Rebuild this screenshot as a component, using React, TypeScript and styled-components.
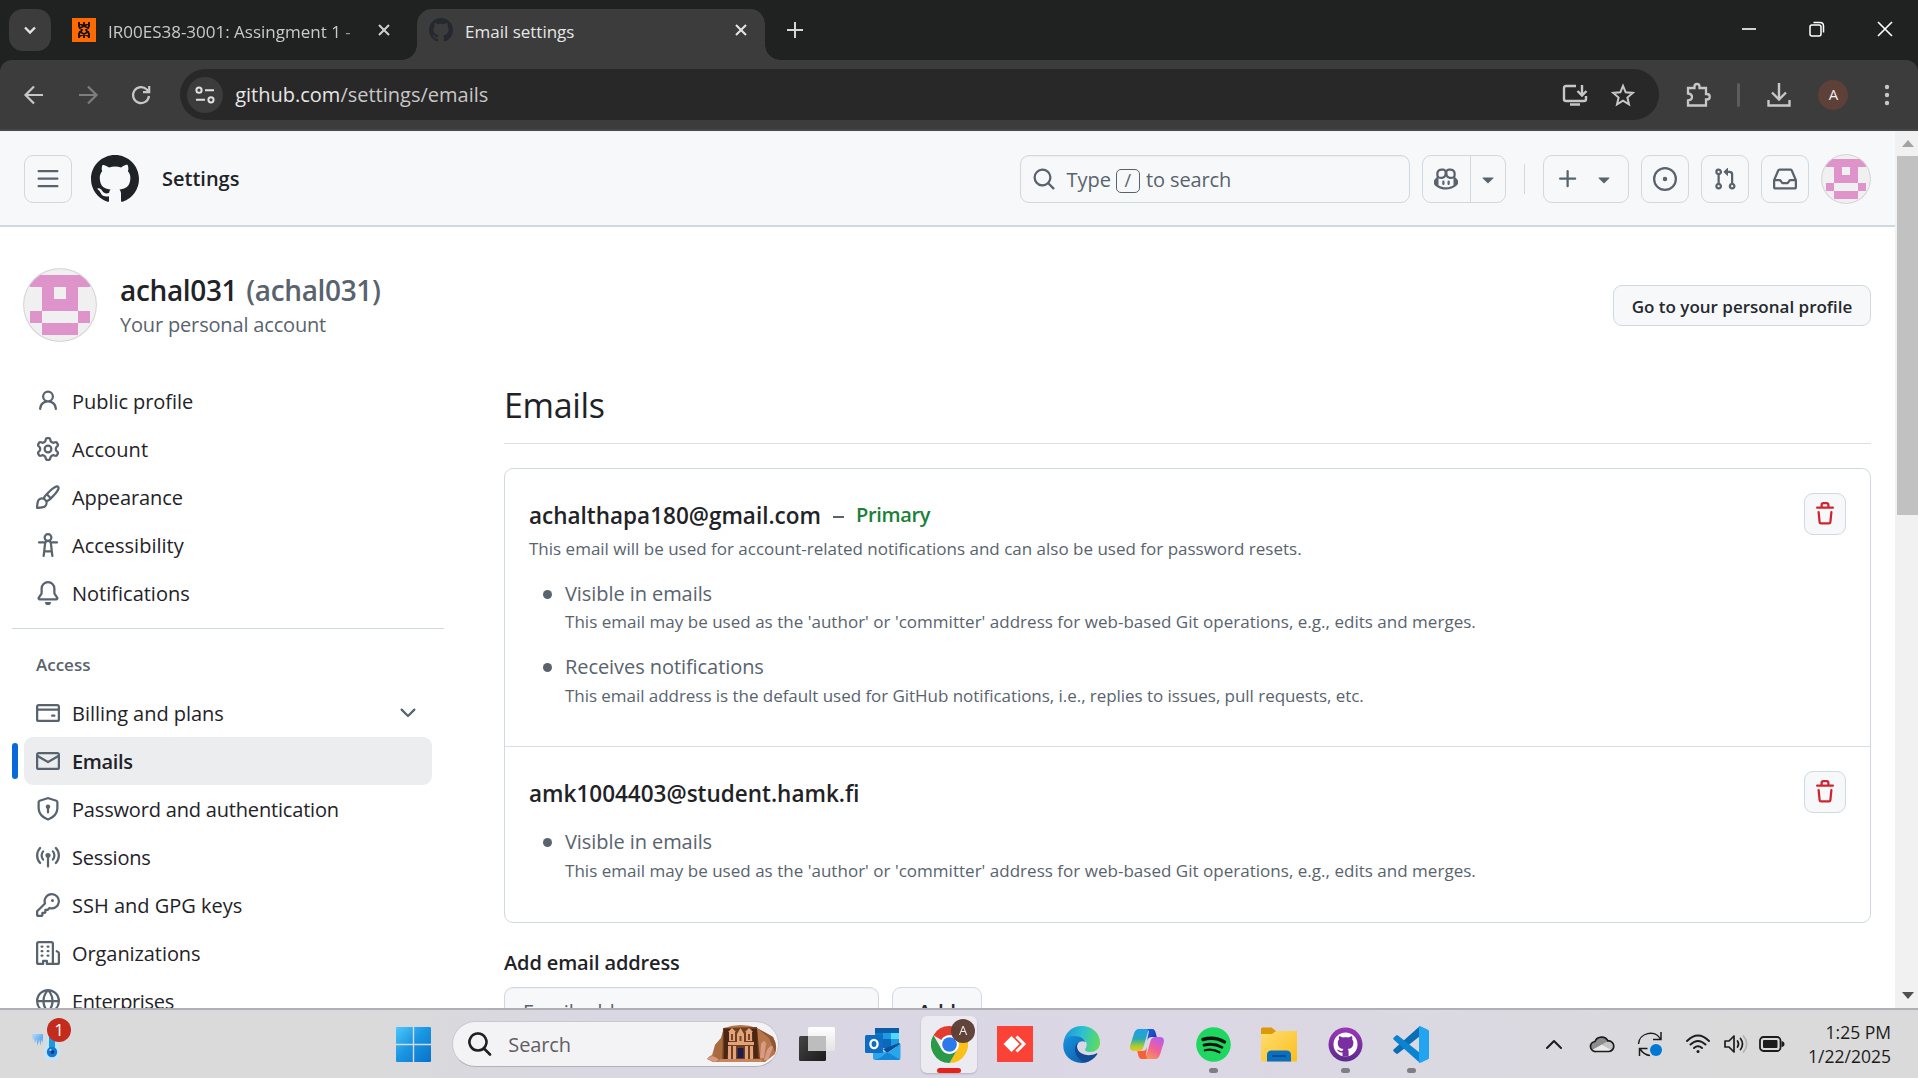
import React from "react";
import styled, { createGlobalStyle, css } from "styled-components";

const FONT = '"Segoe UI", "Open Sans", "Noto Sans", sans-serif';

const GlobalStyle = createGlobalStyle`
  *, *::before, *::after { box-sizing: border-box; }
  html, body { margin: 0; padding: 0; background: #202221; overflow: hidden; }
  body { font-family: ${FONT}; color: #1f2328; }
  svg { display: block; flex: none; }
  ul { list-style: none; margin: 0; padding: 0; }
  h1, h2, h3, p { margin: 0; font-weight: 400; }
`;

/* ---------- shared ---------- */

const Txt = styled.span<{ $size?: number; $track?: number; $weight?: number; $color?: string; $dy?: number }>`
  display: inline-block;
  white-space: pre;
  line-height: 1.4;
  font-size: ${(p) => p.$size ?? 20}px;
  letter-spacing: ${(p) => p.$track ?? 0}px;
  font-weight: ${(p) => p.$weight ?? 400};
  color: ${(p) => p.$color ?? "inherit"};
  margin-top: ${(p) => (p.$dy ?? 0) * 2}px;
`;

const ICONS: Record<string, string> = {
  bars: "M1 2.75A.75.75 0 0 1 1.75 2h12.5a.75.75 0 0 1 0 1.5H1.75A.75.75 0 0 1 1 2.75Zm0 5A.75.75 0 0 1 1.75 7h12.5a.75.75 0 0 1 0 1.5H1.75A.75.75 0 0 1 1 7.75ZM1.75 12h12.5a.75.75 0 0 1 0 1.5H1.75a.75.75 0 0 1 0-1.5Z",
  github: "M8 0c4.42 0 8 3.58 8 8a8.013 8.013 0 0 1-5.45 7.59c-.4.08-.55-.17-.55-.38 0-.27.01-1.13.01-2.2 0-.75-.25-1.23-.54-1.48 1.78-.2 3.65-.88 3.65-3.95 0-.88-.31-1.59-.82-2.15.08-.2.36-1.02-.08-2.12 0 0-.67-.22-2.2.82-.64-.18-1.32-.27-2-.27-.68 0-1.36.09-2 .27-1.53-1.03-2.2-.82-2.2-.82-.44 1.1-.16 1.92-.08 2.12-.51.56-.82 1.28-.82 2.15 0 3.06 1.86 3.75 3.64 3.95-.23.2-.44.55-.51 1.07-.46.21-1.61.55-2.33-.66-.15-.24-.6-.83-1.23-.82-.67.01-.27.38.01.53.34.19.73.9.82 1.13.16.45.68 1.31 2.69.94 0 .67.01 1.3.01 1.49 0 .21-.15.45-.55.38A7.995 7.995 0 0 1 0 8c0-4.42 3.58-8 8-8Z",
  search: "M10.68 11.74a6 6 0 0 1-7.922-8.982 6 6 0 0 1 8.982 7.922l3.04 3.04a.749.749 0 0 1-.326 1.275.749.749 0 0 1-.734-.215ZM11.5 7a4.499 4.499 0 1 0-8.997 0A4.499 4.499 0 0 0 11.5 7Z",
  copilot: "M7.998 15.035c-4.562 0-7.873-2.914-7.998-3.749V9.338c.085-.628.677-1.686 1.588-2.065.013-.07.024-.143.036-.218.029-.183.06-.384.126-.612-.201-.508-.254-1.084-.254-1.656 0-.87.128-1.769.693-2.484.579-.733 1.494-1.124 2.724-1.261 1.206-.134 2.262.034 2.944.765.05.053.096.108.139.165.044-.057.094-.112.143-.165.682-.731 1.738-.899 2.944-.765 1.23.137 2.145.528 2.724 1.261.566.715.693 1.614.693 2.484 0 .572-.053 1.148-.254 1.656.066.228.098.429.126.612.012.076.024.148.037.218.924.385 1.522 1.471 1.591 2.095v1.872c0 .766-3.351 3.795-8.002 3.795Zm0-1.485c2.28 0 4.584-1.11 5.002-1.433V7.862l-.023-.116c-.49.21-1.075.291-1.727.291-1.146 0-2.059-.327-2.71-.991A3.222 3.222 0 0 1 8 6.303a3.24 3.24 0 0 1-.544.743c-.65.664-1.563.991-2.71.991-.652 0-1.236-.081-1.727-.291l-.023.116v4.255c.419.323 2.722 1.433 5.002 1.433ZM6.762 2.83c-.193-.206-.637-.413-1.682-.297-1.019.113-1.479.404-1.713.7-.247.312-.369.789-.369 1.554 0 .793.129 1.171.308 1.371.162.181.519.379 1.442.379.853 0 1.339-.235 1.638-.54.315-.322.527-.827.617-1.553.117-.935-.037-1.395-.241-1.614Zm4.155-.297c-1.044-.116-1.488.091-1.681.297-.204.219-.359.679-.242 1.614.091.726.303 1.231.618 1.553.299.305.784.54 1.638.54.922 0 1.28-.198 1.442-.379.179-.2.308-.578.308-1.371 0-.765-.123-1.242-.37-1.554-.233-.296-.693-.587-1.713-.7ZM6.25 9.037a.75.75 0 0 1 .75.75v1.501a.75.75 0 0 1-1.5 0V9.787a.75.75 0 0 1 .75-.75Zm4.25.75v1.501a.75.75 0 0 1-1.5 0V9.787a.75.75 0 0 1 1.5 0Z",
  caret: "m4.427 7.427 3.396 3.396a.25.25 0 0 0 .354 0l3.396-3.396A.25.25 0 0 0 11.396 7H4.604a.25.25 0 0 0-.177.427Z",
  plus: "M7.75 2a.75.75 0 0 1 .75.75V7h4.25a.75.75 0 0 1 0 1.5H8.5v4.25a.75.75 0 0 1-1.5 0V8.5H2.75a.75.75 0 0 1 0-1.5H7V2.75A.75.75 0 0 1 7.75 2Z",
  issue: "M8 9.5a1.5 1.5 0 1 0 0-3 1.5 1.5 0 0 0 0 3ZM8 0a8 8 0 1 1 0 16A8 8 0 0 1 8 0ZM1.5 8a6.5 6.5 0 1 0 13 0 6.5 6.5 0 0 0-13 0Z",
  pull: "M1.5 3.25a2.25 2.25 0 1 1 3 2.122v5.256a2.251 2.251 0 1 1-1.5 0V5.372A2.25 2.25 0 0 1 1.5 3.25Zm5.677-.177L9.573.677A.25.25 0 0 1 10 .854V2.5h1A2.5 2.5 0 0 1 13.5 5v5.628a2.251 2.251 0 1 1-1.5 0V5a1 1 0 0 0-1-1h-1v1.646a.25.25 0 0 1-.427.177L7.177 3.427a.25.25 0 0 1 0-.354ZM3.75 2.5a.75.75 0 1 0 0 1.5.75.75 0 0 0 0-1.5Zm0 9.5a.75.75 0 1 0 0 1.5.75.75 0 0 0 0-1.5Zm8.25.75a.75.75 0 1 0 1.5 0 .75.75 0 0 0-1.5 0Z",
  inbox: "M2.8 2.06A1.75 1.75 0 0 1 4.41 1h7.18c.7 0 1.333.417 1.61 1.06l2.74 6.395c.04.093.06.194.06.295v4.5A1.75 1.75 0 0 1 14.25 15H1.75A1.75 1.75 0 0 1 0 13.25v-4.5c0-.101.02-.202.06-.295Zm1.61.44a.25.25 0 0 0-.23.152L1.887 8H4.75a.75.75 0 0 1 .6.3L6.625 10h2.75l1.275-1.7a.75.75 0 0 1 .6-.3h2.863L11.82 2.652a.25.25 0 0 0-.23-.152Zm10.09 7h-2.875l-1.275 1.7a.75.75 0 0 1-.6.3h-3.5a.75.75 0 0 1-.6-.3L4.375 9.5H1.5v3.75c0 .138.112.25.25.25h12.5a.25.25 0 0 0 .25-.25Z",
  person: "M10.561 8.073a6.005 6.005 0 0 1 3.432 5.142.75.75 0 1 1-1.498.07 4.5 4.5 0 0 0-8.99 0 .75.75 0 0 1-1.498-.07 6.004 6.004 0 0 1 3.431-5.142 3.999 3.999 0 1 1 5.123 0ZM10.5 5a2.5 2.5 0 1 0-5 0 2.5 2.5 0 0 0 5 0Z",
  gear: "M8 0a8.2 8.2 0 0 1 .701.031C9.444.095 9.99.645 10.16 1.29l.288 1.107c.018.066.079.158.212.224.231.114.454.243.668.386.123.082.233.09.299.071l1.103-.303c.644-.176 1.392.021 1.82.63.27.385.506.792.704 1.218.315.675.111 1.422-.364 1.891l-.814.806c-.049.048-.098.147-.088.294.016.257.016.515 0 .772-.01.147.038.246.088.294l.814.806c.475.469.679 1.216.364 1.891a7.977 7.977 0 0 1-.704 1.217c-.428.61-1.176.807-1.82.63l-1.102-.302c-.067-.019-.177-.011-.3.071a5.909 5.909 0 0 1-.668.386c-.133.066-.194.158-.211.224l-.29 1.106c-.168.646-.715 1.196-1.458 1.26a8.006 8.006 0 0 1-1.402 0c-.743-.064-1.289-.614-1.458-1.26l-.289-1.106c-.018-.066-.079-.158-.212-.224a5.738 5.738 0 0 1-.668-.386c-.123-.082-.233-.09-.299-.071l-1.103.303c-.644.176-1.392-.021-1.82-.63a8.12 8.12 0 0 1-.704-1.218c-.315-.675-.111-1.422.363-1.891l.815-.806c.05-.048.098-.147.088-.294a6.214 6.214 0 0 1 0-.772c.01-.147-.038-.246-.088-.294l-.815-.806C.635 6.045.431 5.298.746 4.623a7.92 7.92 0 0 1 .704-1.217c.428-.61 1.176-.807 1.82-.63l1.102.302c.067.019.177.011.3-.071.214-.143.437-.272.668-.386.133-.066.194-.158.211-.224l.29-1.106C6.009.645 6.556.095 7.299.03 7.53.01 7.764 0 8 0Zm-.571 1.525c-.036.003-.108.036-.137.146l-.289 1.105c-.147.561-.549.967-.998 1.189-.173.086-.34.183-.5.29-.417.278-.97.423-1.529.27l-1.103-.303c-.109-.03-.175.016-.195.045-.22.312-.412.644-.573.99-.014.031-.021.11.059.19l.815.806c.411.406.562.957.53 1.456a4.709 4.709 0 0 0 0 .582c.032.499-.119 1.05-.53 1.456l-.815.806c-.081.08-.073.159-.059.19.162.346.353.677.573.989.02.03.085.076.195.046l1.102-.303c.56-.153 1.113-.008 1.53.27.161.107.328.204.501.29.447.222.85.629.997 1.189l.289 1.105c.029.109.101.143.137.146a6.6 6.6 0 0 0 1.142 0c.036-.003.108-.036.137-.146l.289-1.105c.147-.561.549-.967.998-1.189.173-.086.34-.183.5-.29.417-.278.97-.423 1.529-.27l1.103.303c.109.029.175-.016.195-.045.22-.313.411-.644.573-.99.014-.031.021-.11-.059-.19l-.815-.806c-.411-.406-.562-.957-.53-1.456a4.709 4.709 0 0 0 0-.582c-.032-.499.119-1.05.53-1.456l.815-.806c.081-.08.073-.159.059-.19a6.464 6.464 0 0 0-.573-.989c-.02-.03-.085-.076-.195-.046l-1.102.303c-.56.153-1.113.008-1.53-.27a4.44 4.44 0 0 0-.501-.29c-.447-.222-.85-.629-.997-1.189l-.289-1.105c-.029-.11-.101-.143-.137-.146a6.6 6.6 0 0 0-1.142 0ZM11 8a3 3 0 1 1-6 0 3 3 0 0 1 6 0ZM9.5 8a1.5 1.5 0 1 0-3.001.001A1.5 1.5 0 0 0 9.5 8Z",
  brush: "M11.134 1.535c.7-.509 1.416-.942 2.076-1.155.649-.21 1.463-.267 2.069.34.603.601.568 1.411.368 2.07-.202.668-.624 1.39-1.125 2.096-1.011 1.424-2.496 2.987-3.775 4.249-1.098 1.084-2.132 1.839-3.04 2.3a3.744 3.744 0 0 1-1.055 3.217c-.431.431-1.065.691-1.657.861-.614.177-1.294.287-1.914.357A21.151 21.151 0 0 1 .797 16H.743l.007-.75H.749L.742 16a.75.75 0 0 1-.743-.742l.743-.008-.742.007v-.054a21.25 21.25 0 0 1 .13-2.284c.067-.647.187-1.287.358-1.914.17-.591.43-1.226.86-1.657a3.746 3.746 0 0 1 3.227-1.054c.466-.893 1.225-1.907 2.314-2.982 1.271-1.255 2.833-2.75 4.245-3.777ZM1.62 13.089c-.051.464-.086.929-.104 1.395.466-.018.932-.053 1.396-.104a10.511 10.511 0 0 0 1.668-.309c.526-.151.856-.325 1.011-.48a2.25 2.25 0 1 0-3.182-3.182c-.155.155-.329.485-.48 1.01a10.515 10.515 0 0 0-.309 1.67Zm10.396-10.34c-1.224.89-2.605 2.189-3.822 3.384l1.718 1.718c1.21-1.205 2.51-2.597 3.387-3.833.47-.662.78-1.227.912-1.662.134-.444.032-.551.009-.575h-.001V1.78c-.014-.014-.113-.113-.548.027-.432.14-.995.462-1.655.942Zm-4.832 7.266-.001.001a9.859 9.859 0 0 0 1.63-1.142L7.155 7.216a9.7 9.7 0 0 0-1.161 1.607c.482.302.889.71 1.19 1.192Z",
  accessibility: "M9.923 5.302c.063.063.122.129.178.198H14A.75.75 0 0 1 14 7h-3.3l.578 5.163.362 2.997a.75.75 0 0 1-1.49.18L9.868 13H6.132l-.282 2.34a.75.75 0 0 1-1.49-.18l.362-2.997L5.3 7H2a.75.75 0 0 1 0-1.5h3.9a2.54 2.54 0 0 1 .176-.198 3 3 0 1 1 3.847 0ZM9.2 7.073h-.001a1.206 1.206 0 0 0-2.398 0L6.305 11.5h3.39ZM9.5 3a1.5 1.5 0 1 0-3.001.001A1.5 1.5 0 0 0 9.5 3Z",
  bell: "M8 16a2 2 0 0 0 1.985-1.75c.017-.137-.097-.25-.235-.25h-3.5c-.138 0-.252.113-.235.25A2 2 0 0 0 8 16ZM3 5a5 5 0 0 1 10 0v2.947c0 .05.015.098.042.139l1.703 2.555A1.519 1.519 0 0 1 13.482 13H2.518a1.516 1.516 0 0 1-1.263-2.36l1.703-2.554A.255.255 0 0 0 3 7.947Zm5-3.5A3.5 3.5 0 0 0 4.5 5v2.947c0 .346-.102.683-.294.97l-1.703 2.556a.017.017 0 0 0-.003.01l.001.006c0 .002.002.004.004.006l.006.004.007.001h10.964l.007-.001.006-.004.004-.006.001-.007a.017.017 0 0 0-.003-.01l-1.703-2.554a1.745 1.745 0 0 1-.294-.97V5A3.5 3.5 0 0 0 8 1.5Z",
  card: "M10.75 9a.75.75 0 0 0 0 1.5h1.5a.75.75 0 0 0 0-1.5h-1.5ZM0 3.75C0 2.784.784 2 1.75 2h12.5c.966 0 1.75.784 1.75 1.75v8.5A1.75 1.75 0 0 1 14.25 14H1.75A1.75 1.75 0 0 1 0 12.25ZM14.5 6.5h-13v5.75c0 .138.112.25.25.25h12.5a.25.25 0 0 0 .25-.25Zm0-2.75a.25.25 0 0 0-.25-.25H1.75a.25.25 0 0 0-.25.25V5h13Z",
  mail: "M1.75 2h12.5c.966 0 1.75.784 1.75 1.75v8.5A1.75 1.75 0 0 1 14.25 14H1.75A1.75 1.75 0 0 1 0 12.25v-8.5C0 2.784.784 2 1.75 2ZM1.5 12.251c0 .138.112.25.25.25h12.5a.25.25 0 0 0 .25-.25V5.809L8.38 9.397a.75.75 0 0 1-.76 0L1.5 5.809v6.442Zm13-8.181v-.32a.25.25 0 0 0-.25-.25H1.75a.25.25 0 0 0-.25.25v.32L8 7.88Z",
  shield: "m8.533.133 5.25 1.68A1.75 1.75 0 0 1 15 3.48V7c0 1.566-.32 3.182-1.303 4.682-.983 1.498-2.585 2.813-5.032 3.855a1.697 1.697 0 0 1-1.33 0c-2.447-1.042-4.049-2.357-5.032-3.855C1.32 10.182 1 8.566 1 7V3.48a1.75 1.75 0 0 1 1.217-1.667l5.25-1.68a1.748 1.748 0 0 1 1.066 0Zm-.61 1.429.001.001-5.25 1.68a.251.251 0 0 0-.174.237V7c0 1.36.275 2.666 1.057 3.859.784 1.194 2.121 2.342 4.366 3.298a.196.196 0 0 0 .154 0c2.245-.957 3.582-2.103 4.366-3.297C13.225 9.666 13.5 8.358 13.5 7V3.48a.25.25 0 0 0-.174-.238l-5.25-1.68a.25.25 0 0 0-.153 0ZM9.5 6.5c0 .536-.286 1.032-.75 1.3v2.45a.75.75 0 0 1-1.5 0V7.8A1.5 1.5 0 1 1 9.5 6.5Z",
  broadcast: "M8.75 8.582v5.668a.75.75 0 0 1-1.5 0V8.582a1.75 1.75 0 1 1 1.5 0Zm3.983-7.125a.75.75 0 0 1 1.06.026A7.976 7.976 0 0 1 16 7c0 2.139-.84 4.083-2.207 5.517a.75.75 0 1 1-1.086-1.034A6.474 6.474 0 0 0 14.5 7a6.474 6.474 0 0 0-1.793-4.483.75.75 0 0 1 .026-1.06Zm-9.466 0c.3.286.312.76.026 1.06A6.474 6.474 0 0 0 1.5 7a6.47 6.47 0 0 0 1.793 4.483.75.75 0 0 1-1.086 1.034A7.973 7.973 0 0 1 0 7c0-2.139.84-4.083 2.207-5.517a.75.75 0 0 1 1.06-.026Zm8.556 2.321A4.988 4.988 0 0 1 13 7a4.988 4.988 0 0 1-1.177 3.222.75.75 0 1 1-1.146-.967A3.487 3.487 0 0 0 11.5 7c0-.86-.309-1.645-.823-2.255a.75.75 0 0 1 1.146-.967Zm-6.492.958A3.48 3.48 0 0 0 4.5 7a3.48 3.48 0 0 0 .823 2.255.75.75 0 0 1-1.146.967A4.981 4.981 0 0 1 3 7a4.982 4.982 0 0 1 1.188-3.236.75.75 0 1 1 1.143.972Z",
  key: "M10.5 0a5.499 5.499 0 1 1-1.288 10.848l-.932.932a.749.749 0 0 1-.53.22H7v.75a.749.749 0 0 1-.22.53l-.5.5a.749.749 0 0 1-.53.22H5v.75a.749.749 0 0 1-.22.53l-.5.5a.749.749 0 0 1-.53.22h-2A1.75 1.75 0 0 1 0 14.25v-2c0-.199.079-.389.22-.53l4.932-4.932A5.5 5.5 0 0 1 10.5 0Zm-4 5.5c-.001.431.069.86.205 1.269a.75.75 0 0 1-.181.768L1.5 12.56v1.69c0 .138.112.25.25.25h1.69l.06-.06v-1.19a.75.75 0 0 1 .75-.75h1.19l.06-.06v-1.19a.75.75 0 0 1 .75-.75h1.19l1.023-1.025a.75.75 0 0 1 .768-.18A4 4 0 1 0 6.5 5.5ZM11 6a1 1 0 1 1 0-2 1 1 0 0 1 0 2Z",
  org: "M1.75 16A1.75 1.75 0 0 1 0 14.25V1.75C0 .784.784 0 1.75 0h8.5C11.216 0 12 .784 12 1.75v12.5c0 .085-.006.168-.018.25h2.268a.25.25 0 0 0 .25-.25V8.285a.25.25 0 0 0-.111-.208l-1.055-.703a.749.749 0 1 1 .832-1.248l1.055.703c.487.325.779.871.779 1.456v5.965A1.75 1.75 0 0 1 14.25 16h-3.5a.766.766 0 0 1-.197-.026c-.099.017-.2.026-.303.026h-3a.75.75 0 0 1-.75-.75V14h-1v1.25a.75.75 0 0 1-.75.75Zm-.25-1.75c0 .138.112.25.25.25H4v-1.25a.75.75 0 0 1 .75-.75h2.5a.75.75 0 0 1 .75.75v1.25h2.25a.25.25 0 0 0 .25-.25V1.75a.25.25 0 0 0-.25-.25h-8.5a.25.25 0 0 0-.25.25ZM3.75 6h.5a.75.75 0 0 1 0 1.5h-.5a.75.75 0 0 1 0-1.5ZM3 3.75A.75.75 0 0 1 3.75 3h.5a.75.75 0 0 1 0 1.5h-.5A.75.75 0 0 1 3 3.75Zm4 3A.75.75 0 0 1 7.75 6h.5a.75.75 0 0 1 0 1.5h-.5A.75.75 0 0 1 7 6.75ZM7.75 3h.5a.75.75 0 0 1 0 1.5h-.5a.75.75 0 0 1 0-1.5ZM3 9.75A.75.75 0 0 1 3.75 9h.5a.75.75 0 0 1 0 1.5h-.5A.75.75 0 0 1 3 9.75ZM7.75 9h.5a.75.75 0 0 1 0 1.5h-.5a.75.75 0 0 1 0-1.5Z",
  globe: "M8 0a8 8 0 1 1 0 16A8 8 0 0 1 8 0ZM5.78 8.75a9.64 9.64 0 0 0 1.363 4.177c.255.426.542.832.857 1.215.245-.296.551-.705.857-1.215A9.64 9.64 0 0 0 10.22 8.75Zm4.44-1.5a9.64 9.64 0 0 0-1.363-4.177c-.307-.51-.612-.919-.857-1.215a9.927 9.927 0 0 0-.857 1.215A9.64 9.64 0 0 0 5.78 7.25Zm-5.944 1.5H1.543a6.507 6.507 0 0 0 4.666 5.5c-.123-.181-.24-.365-.352-.552-.715-1.192-1.437-2.874-1.581-4.948Zm-2.733-1.5h2.733c.144-2.074.866-3.756 1.58-4.948.12-.197.237-.381.353-.552a6.507 6.507 0 0 0-4.666 5.5Zm10.181 1.5c-.144 2.074-.866 3.756-1.58 4.948-.12.197-.237.381-.353.552a6.507 6.507 0 0 0 4.666-5.5Zm2.733-1.5a6.507 6.507 0 0 0-4.666-5.5c.123.181.24.365.353.552.714 1.192 1.436 2.874 1.58 4.948Z",
  trash: "M11 1.75V3h2.25a.75.75 0 0 1 0 1.5H2.75a.75.75 0 0 1 0-1.5H5V1.75C5 .784 5.784 0 6.75 0h2.5C10.216 0 11 .784 11 1.75ZM4.496 6.675l.66 6.6a.25.25 0 0 0 .249.225h5.19a.25.25 0 0 0 .249-.225l.66-6.6a.75.75 0 0 1 1.492.149l-.66 6.6A1.748 1.748 0 0 1 10.595 15h-5.19a1.75 1.75 0 0 1-1.741-1.575l-.66-6.6a.75.75 0 1 1 1.492-.15ZM6.5 1.75V3h3V1.75a.25.25 0 0 0-.25-.25h-2.5a.25.25 0 0 0-.25.25Z",
  chevron: "M12.78 5.22a.749.749 0 0 1 0 1.06l-4.25 4.25a.749.749 0 0 1-1.06 0L3.22 6.28a.749.749 0 1 1 1.06-1.06L8 8.939l3.72-3.719a.749.749 0 0 1 1.06 0Z",
};

function Icon({ name, size = 24, color = "#59636e" }: { name: string; size?: number; color?: string }) {
  return (
    <svg width={size} height={size} viewBox="0 0 16 16" fill={color}>
      <path d={ICONS[name]} />
    </svg>
  );
}

type StrokeProps = { d: string; w?: number; h?: number; color?: string; sw?: number; round?: boolean };
function Stroke({ d, w = 24, h = 24, color = "#c7c7c7", sw = 2.2, round }: StrokeProps) {
  return (
    <svg width={w} height={h} viewBox={`0 0 ${w} ${h}`} fill="none" stroke={color} strokeWidth={sw}
      strokeLinecap={round ? "round" : "butt"} strokeLinejoin={round ? "round" : "miter"}>
      <path d={d} />
    </svg>
  );
}

/* ---------- browser chrome ---------- */

const Screen = styled.div`
  width: 1918px;
  height: 1078px;
  display: flex;
  flex-direction: column;
  overflow: hidden;
`;

const TabStrip = styled.div`
  height: 60px;
  flex: none;
  display: flex;
  align-items: flex-start;
  background: #202221;
  padding-left: 9px;
`;

const TabSearch = styled.div`
  width: 42px;
  height: 42px;
  margin-top: 9px;
  border-radius: 14px;
  background: #3c3c3c;
  display: grid;
  place-items: center;
`;

const flare = css`
  content: "";
  position: absolute;
  bottom: 0;
  width: 15px;
  height: 15px;
`;

const Tab = styled.div<{ $active?: boolean }>`
  position: relative;
  display: flex;
  align-items: center;
  height: 51px;
  margin-top: 9px;
  padding-bottom: 9px;
  border-radius: 15px 15px 0 0;
  color: ${(p) => (p.$active ? "#e6e6e6" : "#c9c9c9")};
  ${(p) =>
    p.$active
      ? css`
          width: 348px;
          padding-left: 12px;
          padding-right: 11px;
          background: #3c3c3c;
          &::before { ${flare} left: -15px; background: radial-gradient(circle at 0 0, transparent 14.5px, #3c3c3c 15px); }
          &::after { ${flare} right: -15px; background: radial-gradient(circle at 100% 0, transparent 14.5px, #3c3c3c 15px); }
        `
      : css`
          width: 366px;
          padding-left: 21px;
          padding-right: 27px;
        `}
`;

const TabTitle = styled.div<{ $fade?: boolean }>`
  flex: 1;
  padding-left: 12px;
  padding-top: 3px;
  overflow: hidden;
  ${(p) => p.$fade && "mask-image: linear-gradient(90deg, #000 90%, rgba(0,0,0,.35) 97%); margin-right: 12px;"}
`;

const NewTab = styled.div`
  padding: 21px 0 0 22px;
`;

const WindowButtons = styled.div`
  margin-left: auto;
  margin-right: -1px;
  display: flex;
  padding-top: 9px;
  & > div { width: 68px; height: 40px; display: grid; place-items: center; }
`;

const ToolbarBack = styled.div`
  flex: none;
  background: #202221;
`;

const Toolbar = styled.div`
  height: 71px;
  background: #3c3c3c;
  border-radius: 12px 12px 0 0;
  border-bottom: 2px solid #484848;
  display: flex;
  align-items: center;
  padding-left: 7px;
  padding-right: 4px;
`;

const ToolButton = styled.div<{ $w?: number }>`
  width: ${(p) => p.$w ?? 54}px;
  height: 54px;
  display: grid;
  place-items: center;
`;

const AddressBar = styled.div`
  width: 1479px;
  height: 51px;
  flex: none;
  margin-left: 12px;
  border-radius: 26px;
  background: #282828;
  display: flex;
  align-items: center;
  padding-left: 7px;
  padding-right: 12px;
`;

const SiteInfo = styled.div`
  width: 36px;
  height: 36px;
  margin-right: 12px;
  border-radius: 50%;
  background: #3c3c3c;
  display: grid;
  place-items: center;
`;

const Spacer = styled.div`
  flex: 1;
`;

const ToolDivider = styled.div`
  width: 3px;
  height: 24px;
  border-radius: 2px;
  background: #5c5c5c;
  margin: 0 11px 0 0;
`;

const ProfileDot = styled.div<{ $size: number; $font: number }>`
  width: ${(p) => p.$size}px;
  height: ${(p) => p.$size}px;
  border-radius: 50%;
  background: #5d4037;
  color: #f1eeec;
  font-size: ${(p) => p.$font}px;
  line-height: 1;
  display: grid;
  place-items: center;
`;

/* ---------- page ---------- */

const Viewport = styled.div`
  flex: 1;
  min-height: 0;
  display: flex;
  background: #fff;
`;

const Page = styled.div`
  width: 1895px;
  height: 877px;
  overflow: hidden;
`;

const Scrollbar = styled.div`
  width: 23px;
  height: 877px;
  padding-left: 2px;
  background: #f1f1f1;
  display: flex;
  flex-direction: column;
  align-items: center;
`;

const ScrollArrow = styled.div`
  height: 25px;
  flex: none;
  display: grid;
  place-items: center;
`;

const ScrollThumb = styled.div`
  width: 21px;
  height: 359px;
  background: #c1c1c1;
`;

const Header = styled.header`
  height: 96px;
  padding: 2px 24px 0;
  display: flex;
  align-items: center;
  background: #f6f8fa;
  border-bottom: 2px solid #d1d9e0;
`;

const HeaderButton = styled.div<{ $w?: number; $ml?: number }>`
  width: ${(p) => p.$w ?? 48}px;
  height: 48px;
  margin-left: ${(p) => p.$ml ?? 12}px;
  border: 1px solid #d1d9e0;
  border-radius: 9px;
  display: flex;
  align-items: center;
  justify-content: center;
  gap: 12px;
`;

const SplitButton = styled(HeaderButton)`
  gap: 0;
  & > div { height: 100%; display: grid; place-items: center; }
  & > div:first-child { flex: 48; border-right: 1px solid #d1d9e0; }
  & > div:last-child { flex: 35; }
`;

const LogoSlot = styled.div`
  margin: 0 23px 0 19px;
`;

const SearchBox = styled.div`
  width: 390px;
  height: 48px;
  margin-left: auto;
  border: 1.5px solid #d1d9e0;
  border-radius: 9px;
  box-shadow: inset 0 1px 1px rgba(31, 35, 40, 0.04);
  color: #59636e;
  display: flex;
  align-items: center;
  padding-left: 11px;
`;

const Kbd = styled.span`
  width: 24px;
  height: 24px;
  margin: 4px 6px 0 5px;
  border: 1.5px solid #59636e;
  border-radius: 5px;
  font-size: 18px;
  line-height: 20px;
  text-align: center;
`;

const HeaderRule = styled.div`
  width: 1px;
  height: 30px;
  margin: 0 6px 0 18px;
  background: #d1d9e0;
`;

const AvatarSlot = styled.div`
  margin-left: 12px;
`;

const Body = styled.div`
  padding: 40px 24px 0 12px;
`;

const ProfileRow = styled.div`
  height: 76px;
  padding-left: 11px;
  display: flex;
  align-items: center;
`;

const ProfileText = styled.div`
  margin-left: 23px;
  display: flex;
  flex-direction: column;
`;

const NameLine = styled.div`
  display: flex;
  gap: 9px;
  height: 36px;
  align-items: center;
`;

const SubLine = styled.div`
  height: 32px;
  display: flex;
  align-items: center;
`;

const Button = styled.div<{ $w: number; $h: number; $mt?: number }>`
  width: ${(p) => p.$w}px;
  height: ${(p) => p.$h}px;
  margin-top: ${(p) => p.$mt ?? 0}px;
  flex: none;
  border: 1.5px solid #d1d9e0;
  border-radius: 9px;
  background: #f6f8fa;
  color: #25292e;
  display: flex;
  align-items: center;
  justify-content: center;
`;

const Columns = styled.div`
  display: grid;
  grid-template-columns: 432px 1367px;
  column-gap: 60px;
`;

const Sidebar = styled.nav`
  padding-top: 34px;
`;

const NavRow = styled.div<{ $active?: boolean }>`
  height: 48px;
  display: flex;
  align-items: center;
  & > i {
    width: 6px;
    height: 36px;
    border-radius: 4px;
    background: ${(p) => (p.$active ? "#0969da" : "transparent")};
  }
  & > div {
    width: 408px;
    height: 48px;
    margin-left: 6px;
    padding: 0 12px;
    border-radius: 9px;
    background: ${(p) => (p.$active ? "#ecedef" : "transparent")};
    display: flex;
    align-items: center;
    gap: 12px;
  }
`;

const SidebarRule = styled.div`
  height: 1px;
  margin: 11px 0;
  background: #d1d9e0;
`;

const SidebarHeading = styled.div`
  height: 49px;
  padding-left: 24px;
  display: flex;
  align-items: center;
`;

const Main = styled.main`
  padding-top: 34px;
`;

const Title = styled.h2`
  height: 67px;
  padding-bottom: 8px;
  border-bottom: 1px solid #d9dfe5;
  display: flex;
  align-items: center;
`;

const Card = styled.div`
  margin-top: 24px;
  border: 1.5px solid #d1d9e0;
  border-radius: 9px;
`;

const CardRow = styled.div<{ $h: number }>`
  height: ${(p) => p.$h}px;
  padding: 24px 24px 0 24px;
  display: flex;
  justify-content: space-between;
  color: #59636e;
  & + & { border-top: 1px solid #d9dfe5; }
`;

const EmailLine = styled.div`
  height: 46px;
  display: flex;
  align-items: center;
  color: #1f2328;
`;

const Dash = styled.span`
  width: 11px;
  height: 1.5px;
  margin: 2px 12px 0 12px;
  background: #59636e;
`;

const Note = styled.div<{ $h?: number }>`
  height: ${(p) => p.$h ?? 27}px;
  display: flex;
  align-items: center;
`;

const Bullets = styled.ul<{ $mt: number }>`
  margin-top: ${(p) => p.$mt}px;
  padding-left: 36px;
  display: flex;
  flex-direction: column;
  gap: 16px;
`;

const BulletHead = styled.div`
  height: 30px;
  display: flex;
  align-items: center;
  &::before {
    content: "";
    width: 9px;
    height: 9px;
    margin-left: -22px;
    margin-right: 13px;
    border-radius: 50%;
    background: #59636e;
  }
`;

const AddLabel = styled.h3`
  height: 64px;
  padding-top: 16px;
  display: flex;
  align-items: center;
`;

const AddForm = styled.div`
  display: flex;
  gap: 13px;
`;

const Input = styled.div`
  width: 375px;
  height: 48px;
  padding-left: 18px;
  border: 1.5px solid #d1d9e0;
  border-radius: 9px;
  background: #f6f8fa;
  box-shadow: inset 0 1px 1px rgba(31, 35, 40, 0.04);
  display: flex;
  align-items: center;
`;

/* ---------- taskbar ---------- */

const Taskbar = styled.div`
  flex: none;
  height: 70px;
  border-top: 2px solid #b0afb5;
  background: linear-gradient(90deg, #dadada 0%, #dadada 18%, #d9d7e2 32%, #dbd7e5 60%, #dad9e0 80%, #dadada 92%);
  display: flex;
  align-items: center;
`;

const Widget = styled.div`
  position: relative;
  width: 40px;
  height: 56px;
  margin-left: 30px;
`;

const Badge = styled.div`
  position: absolute;
  left: 17px;
  top: 2px;
  width: 24px;
  height: 24px;
  border-radius: 50%;
  background: #c42b1c;
  color: #fff;
  font-size: 17px;
  line-height: 24px;
  text-align: center;
`;

const StartButton = styled.div`
  margin-left: 326px;
  width: 35px;
`;

const TaskSearch = styled.div`
  width: 327px;
  height: 46px;
  margin-left: 21px;
  border: 1.5px solid #c9c8cf;
  border-bottom-color: #b3b2b8;
  border-radius: 23px;
  background: #f3f3f6;
  display: flex;
  align-items: center;
  overflow: hidden;
  padding: 0 1px 0 14px;
`;

const Apps = styled.div`
  display: flex;
  margin-left: 5px;
`;

const AppCell = styled.div<{ $open?: boolean }>`
  position: relative;
  width: 66px;
  height: 60px;
  display: grid;
  place-items: center;
  &::after {
    content: "";
    display: ${(p) => (p.$open ? "block" : "none")};
    position: absolute;
    bottom: 1px;
    width: 9px;
    height: 5px;
    border-radius: 3px;
    background: #7f7d84;
  }
`;

const ActiveTile = styled.div`
  position: relative;
  width: 56px;
  height: 57px;
  border-radius: 6px;
  background: #ecebf2;
  box-shadow: 0 1px 2px rgba(0, 0, 0, 0.18);
  display: grid;
  place-items: center;
  &::after {
    content: "";
    position: absolute;
    bottom: 0;
    width: 24px;
    height: 5px;
    border-radius: 3px;
    background: #e3221c;
  }
`;

const TileBadge = styled.div`
  position: absolute;
  right: 2px;
  top: 3px;
  opacity: 0.97;
`;

const Tray = styled.div`
  margin-left: auto;
  padding-right: 27px;
  display: flex;
  align-items: center;
`;

const TrayCell = styled.div<{ $w: number }>`
  width: ${(p) => p.$w}px;
  display: grid;
  place-items: center;
`;

const Clock = styled.div`
  width: 97px;
  display: flex;
  flex-direction: column;
  align-items: flex-end;
  color: #1c1c1c;
`;

/* ---------- drawings ---------- */

const IDENTICON = ["11111", "01010", "01110", "10001", "01110"];

function Identicon({ size, cell }: { size: number; cell: number }) {
  const o = (size - cell * 5) / 2;
  const id = `ident${size}`;
  return (
    <svg width={size} height={size} viewBox={`0 0 ${size} ${size}`}>
      <clipPath id={id}><circle cx={size / 2} cy={size / 2} r={size / 2 - 1} /></clipPath>
      <circle cx={size / 2} cy={size / 2} r={size / 2} fill="#d8d8da" />
      <g clipPath={`url(#${id})`} shapeRendering="crispEdges">
        <circle cx={size / 2} cy={size / 2} r={size / 2 - 1} fill="#f0f0f0" shapeRendering="auto" />
        {IDENTICON.flatMap((r, y) =>
          [...r].map((c, x) => (c === "1" ? <rect key={`${x}-${y}`} x={o + x * cell} y={o + y * cell} width={cell} height={cell} fill="#de94ca" /> : null))
        )}
      </g>
    </svg>
  );
}

const CourseIcon = () => (
  <svg width="24" height="24" viewBox="0 0 24 24">
    <rect width="24" height="24" fill="#ff6a00" />
    <g stroke="#1b1009" strokeWidth="1.900" fill="none">
      <path d="M7 4v4.500l3 3.500-3 3.500V20M12 4v4M12 16v4M17 4v4.500l-3 3.500 3 3.500V20M7 5.500l10 5M17 5.500l-10 5M7 13.500l10 5M17 13.500l-10 5" />
    </g>
  </svg>
);

const WindowsLogo = () => (
  <svg width="35" height="35" viewBox="0 0 35 35">
    <defs><linearGradient id="win" x1="0" y1="0" x2="1" y2="1"><stop offset="0" stopColor="#4cc8fb" /><stop offset=".45" stopColor="#1c97e3" /><stop offset="1" stopColor="#0672cb" /></linearGradient></defs>
    <path fill="url(#win)" d="M1 0h15.8v16.8H0V1a1 1 0 0 1 1-1Zm17.2 0H34a1 1 0 0 1 1 1v15.8H18.2ZM0 18.2h16.8V35H1a1 1 0 0 1-1-1Zm18.2 0H35V34a1 1 0 0 1-1 1H18.2Z" />
  </svg>
);

const Weather = () => (
  <svg width="40" height="56" viewBox="0 0 40 56">
    <defs><linearGradient id="ice" x1="0" y1="0" x2="1" y2="1"><stop offset="0" stopColor="#b8dcfb" /><stop offset=".6" stopColor="#62aef0" /><stop offset="1" stopColor="#8cc4f5" /></linearGradient></defs>
    <path fill="url(#ice)" d="M2 18h11v9l-1.300-3-1.300 6-1.300-7-1.400 7-1.400-7-1.300 4-1.300-5-1 2z" />
    <rect x="17" y="8" width="11" height="30" rx="5.500" fill="#c3e4fa" />
    <circle cx="22" cy="36" r="8.500" fill="#c3e4fa" />
    <rect x="19" y="20" width="6" height="16" fill="#1a9be0" />
    <circle cx="22" cy="36" r="5.200" fill="#1379d2" />
    <circle cx="22.500" cy="36" r="2" fill="#0b3f9c" />
    <circle cx="20.500" cy="34" r="1.100" fill="#9adcff" />
  </svg>
);

const Petra = () => (
  <svg width="70" height="40" viewBox="0 0 70 40">
    <path fill="#b5764a" d="M0 35Q2 32 5 31L8 21L14 14L17 4Q34-2 50 4L66 13Q71 22 68 30L58 38H6Z" />
    <path fill="#8f5733" d="M50 4L66 13Q71 22 68 28L62 14Z" />
    <path fill="#6f3f22" d="M16 4L50 3L53 36L15 37Z" />
    <path fill="#9c6034" d="M8 21L14 14L16 8L16 37H6Z" opacity=".5" />
    <path fill="#4c2614" d="M17 5h7l-4 30h-3zM45 5h5l1 29h-4z" />
    <g fill="#e2a37b">
      <rect x="21" y="18" width="26" height="3" />
      <rect x="22" y="8" width="6" height="9" /><rect x="39" y="8" width="6" height="9" />
      <path d="M21 8l4-4 4 4zM38 8l4-4 4 4zM30 10l3.500-6 3.500 6z" />
      <rect x="30" y="10" width="7" height="8" />
      <rect x="21" y="22" width="3" height="13" /><rect x="26" y="22" width="3" height="13" /><rect x="38" y="22" width="3" height="13" /><rect x="43" y="22" width="3" height="13" />
    </g>
    <path fill="#7b4325" d="M24 10h2v6h-2zM41 10h2v6h-2zM32.500 12h2v5h-2z" />
    <rect x="30.500" y="24" width="6" height="10" fill="#1e1a4a" />
    <path fill="#c98460" d="M13 35h41l2 3H11z" />
    <path fill="#d79a83" d="M54 20q4-6 5 0l-2 14h-4zM60 26q4-6 6-3l-5 13h-4zM0 35q5-6 12 1l-4 2z" />
  </svg>
);

const TaskView = () => (
  <svg width="36" height="36" viewBox="0 0 36 36">
    <defs>
      <linearGradient id="tv1" x1="0" y1="0" x2="1" y2="1"><stop offset="0" stopColor="#454545" /><stop offset="1" stopColor="#1b1b1b" /></linearGradient>
      <linearGradient id="tv2" x1="0" y1="0" x2="0" y2="1"><stop offset="0" stopColor="#fff" /><stop offset="1" stopColor="#e3e3e3" /></linearGradient>
    </defs>
    <rect x="0" y="10" width="27" height="25" rx="1.500" fill="url(#tv1)" />
    <rect x="9" y="1" width="27" height="24" rx="1.500" fill="url(#tv2)" />
    <rect x="9" y="10" width="18" height="15" fill="#bdbdbd" />
  </svg>
);

const Outlook = () => (
  <svg width="36" height="36" viewBox="0 0 36 36">
    <path fill="#0a5ea8" d="M10 2h24v8H10z" />
    <path fill="#1275c6" d="M10 7h12v14H10z" />
    <path fill="#1f9be6" d="M18 7h8v6h-8zM26 13h8v8h-8z" />
    <path fill="#50d9ff" d="M26 7h8v6h-8z" />
    <path fill="#0c68bd" d="M18 13h8v9h-8z" />
    <path fill="#0d4f96" d="M34 17l1.500 1L22 27l-4-4z" />
    <path fill="#2aa6ec" d="M8 20l14 7L35.500 18v14a2 2 0 0 1-2 2H10a2 2 0 0 1-2-2z" />
    <path fill="#1587d8" d="M22 26l13 7.500q-1 .5-2 .5H10q8-3 12-8z" />
    <rect x="0" y="9" width="18" height="18" rx="1.500" fill="#0f6cc4" />
    <ellipse cx="9" cy="18" rx="3.600" ry="4.100" fill="none" stroke="#fff" strokeWidth="2.300" />
  </svg>
);

const Chrome = () => (
  <svg width="37" height="37" viewBox="0 0 48 48">
    <path fill="#e33b2e" d="M24 0A24 24 0 0 1 44.800 12H24a12 12 0 0 0-10.400 6L3.200 12A24 24 0 0 1 24 0Z" />
    <path fill="#fbc116" d="M44.800 12A24 24 0 0 1 24 48l10.400-18A12 12 0 0 0 34.400 18L33 12Z" />
    <path fill="#2a9a48" d="M24 48A24 24 0 0 1 3.200 12l10.400 18A12 12 0 0 0 34.400 30L24 48Z" />
    <circle cx="24" cy="24" r="12" fill="#fff" />
    <circle cx="24" cy="24" r="9.500" fill="#2c79ee" />
  </svg>
);

const AnyDesk = () => (
  <svg width="36" height="36" viewBox="0 0 36 36">
    <rect width="36" height="36" fill="#fb4236" />
    <path fill="#fff" d="M6.500 18l8-8 8 8-8 8z" />
    <path fill="none" stroke="#fff" strokeWidth="3" d="M19.500 10.500l7.500 7.500-7.500 7.500" />
  </svg>
);

const Edge = () => (
  <svg width="37" height="37" viewBox="0 0 37 37">
    <defs>
      <linearGradient id="e1" x1="0" y1=".3" x2="1" y2=".5"><stop offset="0" stopColor="#1b94dc" /><stop offset=".5" stopColor="#2cc2cf" /><stop offset="1" stopColor="#5edb5c" /></linearGradient>
      <linearGradient id="e2" x1="0" y1="0" x2="1" y2="1"><stop offset="0" stopColor="#1693dd" /><stop offset="1" stopColor="#0f55a6" /></linearGradient>
    </defs>
    <path fill="url(#e1)" d="M.5 18C1 7 9 0 18.500 0 29 0 37 7 37 16.500c0 6-4.500 9.500-9.500 9.500-4 0-6.500-1.500-5-3.500 3-4 .5-9.500-5-9.500C9 13 2 14 .5 18Z" />
    <path fill="url(#e2)" d="M.3 18.500C1 12.500 6 9.500 12 10c5 .3 9 2.500 10.500 6-5-2.500-8.500 1-8.500 5 0 7 8 12 17 9.500-3 4.500-8 6.500-12.500 6.500C8 37-.5 29 .3 18.500Z" />
    <path fill="#134a93" d="M14.500 16.500C10 21 11 32 22 36.500c5-1 9-3.500 12.300-8.300.3-.8-.4-1-1-.7C25 31.500 14 28 14 20.500c0-1.500.2-2.700.5-4Z" />
  </svg>
);

const CopilotApp = () => (
  <svg width="36" height="36" viewBox="0 0 36 36">
    <defs>
      <linearGradient id="c1" x1="0" y1="0" x2="0" y2="1"><stop offset="0" stopColor="#1aa0f0" /><stop offset=".45" stopColor="#2aa7b8" /><stop offset=".75" stopColor="#9bcb3c" /><stop offset="1" stopColor="#f5c518" /></linearGradient>
      <linearGradient id="c2" x1=".8" y1="0" x2=".2" y2="1"><stop offset="0" stopColor="#b65cf0" /><stop offset=".5" stopColor="#f0609a" /><stop offset="1" stopColor="#fb9a4b" /></linearGradient>
      <linearGradient id="c3" x1="0" y1="0" x2="1" y2="1"><stop offset="0" stopColor="#1b5fe0" /><stop offset="1" stopColor="#1639a8" /></linearGradient>
    </defs>
    <path fill="url(#c1)" d="M10 3h13c-3 0-4 2-5 6l-3.500 12c-1 3-2.500 4-5 4H5c-4 0-4.500-3-3.500-6.500L5 7.500C6 4.500 7.500 3 10 3Z" />
    <path fill="url(#c3)" d="M18 3h5c2.500 0 3.500 2 4 5l.8 3H23c-3 0-4 1-5 4l2-10z" />
    <path fill="url(#c2)" d="M26 33H13c3 0 4-2 5-6l3.500-12c1-3 2.500-4 5-4H31c4 0 4.500 3 3.500 6.500L31 28.500c-1 3-2.500 4.500-5 4.500Z" />
    <path fill="#f4613d" d="M18 33h-5c-2.500 0-3.500-2-4-5l-.8-3H13c3 0 4-1 5-4l-1 8z" />
  </svg>
);

const Spotify = () => (
  <svg width="35" height="35" viewBox="0 0 35 35">
    <circle cx="17.500" cy="17.500" r="17.300" fill="#1ed760" />
    <g fill="none" stroke="#111" strokeLinecap="round">
      <path d="M7 12.500c7-2 15-1.300 21.500 2.500" strokeWidth="3.400" />
      <path d="M8 18.200c6-1.700 12.500-1 18 2.200" strokeWidth="2.800" />
      <path d="M8.800 23.300c5-1.300 10-.7 14.700 2" strokeWidth="2.200" />
    </g>
  </svg>
);

const Folder = () => (
  <svg width="36" height="36" viewBox="0 0 36 36">
    <defs><linearGradient id="fo" x1="0" y1="0" x2="1" y2="1"><stop offset="0" stopColor="#ffdd72" /><stop offset="1" stopColor="#fbbf1c" /></linearGradient></defs>
    <path fill="#dc9a06" d="M0 3q0-1.500 1.500-1.500h9L15 5v5H0z" />
    <path fill="url(#fo)" d="M0 8h11l4-3h21v29q0 1.500-1.500 1.500h-33Q0 35.500 0 34z" />
    <path fill="#0b6ec0" d="M6 35.500V29q0-4.500 4.500-4.500h15Q30 24.500 30 29v6.500z" />
    <path fill="#0c4f92" d="M11 29h14v2H11z" />
  </svg>
);

const GithubDesktop = () => (
  <svg width="35" height="35" viewBox="0 0 35 35">
    <defs><linearGradient id="gd" x1="0" y1="0" x2="0" y2="1"><stop offset="0" stopColor="#9b37b8" /><stop offset="1" stopColor="#5c2a8c" /></linearGradient></defs>
    <circle cx="17.500" cy="17.500" r="17" fill="url(#gd)" />
    <circle cx="17.500" cy="17.500" r="12" fill="#fff" />
    <path fill="#7a2fa0" d="M14.500 29.500v-4c-3.500.6-4.500-1.500-5.500-3 2 .3 3 2 5.500 1.200.2-.8.600-1.300 1-1.700-4-.5-5.700-2.600-5.700-6.100 0-1.400.4-2.400 1.200-3.300-.3-1-.3-2.200.2-3.400 1.300 0 2.300.6 3.400 1.300 2-.5 4-.5 6 0 1.100-.7 2.100-1.300 3.400-1.300.5 1.200.5 2.400.2 3.400.8.900 1.200 1.900 1.200 3.300 0 3.500-1.900 5.600-5.700 6.100.6.500.9 1.300.9 2.500v5z" />
  </svg>
);

const VsCode = () => (
  <svg width="36" height="37" viewBox="0 0 36 37">
    <path fill="#0b6db3" d="M27 0v10L5 27.500q-1 .8-2 0L.8 25.500q-1.200-1 0-2.200z" />
    <path fill="#0a84d0" d="M27 37V27L5 9.500q-1-.8-2 0L.8 11.500q-1.200 1 0 2.200z" />
    <path fill="#22a5f1" d="M27 0l8 3.700q1 .5 1 1.600v26.400q0 1.100-1 1.600L27 37q-1 0-1-1V1q0-1 1-1z" />
  </svg>
);

const Wifi = () => (
  <svg width="26" height="22" viewBox="0 0 26 22" fill="none" stroke="#1c1c1c" strokeWidth="1.900" strokeLinecap="round">
    <path d="M2 8Q13-3 24 8M5.500 11.500q7.500-7 15 0M9 15q4-3.500 8 0" /><circle cx="13" cy="18.500" r="1.500" fill="#1c1c1c" stroke="none" />
  </svg>
);

const Cloud = () => (
  <svg width="26" height="20" viewBox="0 0 26 20">
    <path fill="#8e8e8e" d="M7 17.500a5 5 0 0 1-1-10A7 7 0 0 1 19 7a5.200 5.200 0 0 1 1 10.500z" />
    <path fill="#e9e9e9" d="M3 16l10-5.500L23 16l-3 1.500H7z" />
    <path fill="#c4c4c4" d="M13 10.500L19 7a5.200 5.200 0 0 1 4 9z" />
    <path fill="none" stroke="#1c1c1c" strokeWidth="1.700" d="M7 17.500a5 5 0 0 1-1-10A7.200 7.200 0 0 1 19 7a5.200 5.200 0 0 1 1 10.500z" />
  </svg>
);

const Sync = () => (
  <svg width="26" height="26" viewBox="0 0 26 26" fill="none" stroke="#1c1c1c" strokeWidth="1.500">
    <path d="M1.500 13C2 2 18-2 23.500 8M24 1v7.500h-8M2.500 25v-7.500h8M3 18q4 6 10 6.500" />
    <circle cx="19" cy="19" r="6" fill="#0078d4" stroke="none" />
  </svg>
);

const Volume = () => (
  <svg width="26" height="24" viewBox="0 0 26 24" fill="none" stroke="#1c1c1c" strokeWidth="1.700" strokeLinejoin="round" strokeLinecap="round">
    <path d="M2 9h4l5-5v16l-5-5H2zM14.500 9q2 3 0 6M17.500 6.500q4 5.500 0 11" />
    <path stroke="#b3b3b5" d="M20.500 4q6.500 8 0 16" />
  </svg>
);

const Battery = () => (
  <svg width="26" height="16" viewBox="0 0 26 16">
    <rect x="1" y="1" width="20.500" height="14" rx="3.500" fill="none" stroke="#1c1c1c" strokeWidth="1.800" />
    <rect x="4" y="4" width="14.500" height="8" rx="1" fill="#1c1c1c" />
    <path fill="#1c1c1c" d="M22.500 5q3 .5 3 3t-3 3z" />
  </svg>
);

/* ---------- content ---------- */

/* icon, label, letter spacing */
const PERSONAL: [string, string, number][] = [
  ["person", "Public profile", -0.05],
  ["gear", "Account", 0.1],
  ["brush", "Appearance", -0.1],
  ["accessibility", "Accessibility", 0],
  ["bell", "Notifications", 0],
];

const ACCESS: [string, string, number][] = [
  ["card", "Billing and plans", -0.04],
  ["mail", "Emails", -0.35],
  ["shield", "Password and authentication", -0.18],
  ["broadcast", "Sessions", -0.18],
  ["key", "SSH and GPG keys", 0],
  ["org", "Organizations", -0.08],
  ["globe", "Enterprises", -0.35],
];

function NavItem({ icon, label, track, active, expandable }: { icon: string; label: string; track: number; active?: boolean; expandable?: boolean }) {
  return (
    <NavRow $active={active}>
      <i />
      <div>
        <Icon name={icon} />
        <Txt $size={20} $track={track} $dy={1} $weight={active ? 600 : 400}>{label}</Txt>
        {expandable && (<><Spacer /><Icon name="chevron" /></>)}
      </div>
    </NavRow>
  );
}

function Bullet({ head, text, track = 0.02, dy = 0 }: { head: string; text: string; track?: number; dy?: number }) {
  return (
    <li>
      <BulletHead><Txt $size={20} $track={-0.07}>{head}</Txt></BulletHead>
      <Note><Txt $size={17} $track={track} $dy={dy}>{text}</Txt></Note>
    </li>
  );
}

const GIT_NOTE = "This email may be used as the 'author' or 'committer' address for web-based Git operations, e.g., edits and merges.";

function BrowserChrome() {
  return (
    <>
      <TabStrip>
        <TabSearch><Stroke w={14} h={14} d="M2 4.500L7 9.500L12 4.500" color="#e3e3e3" sw={2.4} /></TabSearch>
        <Tab>
          <CourseIcon />
          <TabTitle $fade><Txt $size={17}>IR00ES38-3001: Assingment 1 -</Txt></TabTitle>
          <Stroke w={12} h={12} d="M1 1L11 11M11 1L1 11" color="#d0d0d0" sw={2} />
        </Tab>
        <Tab $active>
          <Icon name="github" color="#24292f" />
          <TabTitle><Txt $size={17}>Email settings</Txt></TabTitle>
          <Stroke w={25} h={12} d="M7 1L17 11M17 1L7 11" color="#e6e6e6" sw={2} />
        </Tab>
        <NewTab><Stroke w={16} h={18} d="M8 1V17M0 9H16" color="#d6d6d6" sw={2} /></NewTab>
        <WindowButtons>
          <div><Stroke w={16} h={16} d="M1 8H15" color="#fff" sw={1.6} /></div>
          <div>
            <svg width="16" height="16" viewBox="0 0 16 16" fill="none" stroke="#fff" strokeWidth="1.500">
              <rect x="1" y="4" width="11" height="11" rx="2" />
              <path d="M4.500 1.500h6.500q3.500 0 3.500 3.500v6.500" />
            </svg>
          </div>
          <div><Stroke w={16} h={16} d="M1 1L15 15M15 1L1 15" color="#fff" sw={1.6} /></div>
        </WindowButtons>
      </TabStrip>
      <ToolbarBack>
        <Toolbar>
          <ToolButton><Stroke d="M21 12H4M12 3.500L3.500 12L12 20.500" /></ToolButton>
          <ToolButton><Stroke d="M3 12H20M12 3.500L20.500 12L12 20.500" color="#7d7d7d" /></ToolButton>
          <ToolButton><Stroke d="M20 13A8 8 0 1 1 17.800 6.500L20 9M20.200 3V9.200H14" /></ToolButton>
          <AddressBar>
            <SiteInfo>
              <svg width="20" height="20" viewBox="0 0 20 20" fill="none" stroke="#e0e0e0" strokeWidth="2">
                <circle cx="4" cy="5.200" r="2.600" /><path d="M10 5.200h9M1 14.800h9" /><circle cx="16" cy="14.800" r="2.600" />
              </svg>
            </SiteInfo>
            <Txt $size={20} $color="#e6e6e6">github.com</Txt>
            <Txt $size={20} $color="#c7c7c7">/settings/emails</Txt>
            <Spacer />
            <ToolButton $w={48}><Stroke w={26} h={24} d="M14 3H4Q2 3 2 5V16Q2 18 4 18H22Q24 18 24 16V13M20 2V12M15.500 8L20 12.500L24.500 8M8 21.500H18" sw={2.4} /></ToolButton>
            <ToolButton $w={48}><Stroke d="M12 2.800L14.700 9.300L21.700 9.900L16.400 14.500L18 21.300L12 17.700L6 21.300L7.600 14.500L2.300 9.900L9.300 9.300Z" sw={2} /></ToolButton>
          </AddressBar>
          <ToolButton $w={78}><Stroke w={26} h={26} d="M3 6H9.500V4.500A2.500 2.500 0 0 1 14.500 4.500V6H21V12H22A2.500 2.500 0 0 1 22 17.500H21V23.500H3V18.500Q7 18 7 15T3 11.500Z" sw={2.3} /></ToolButton>
          <Spacer />
          <ToolDivider />
          <ToolButton $w={56}><Stroke w={26} h={26} d="M13 1V17M6 10.500L13 17.500L20 10.500M2.500 18V23.500H23.500V18" sw={2.4} /></ToolButton>
          <ToolButton><ProfileDot $size={30} $font={15}>A</ProfileDot></ToolButton>
          <ToolButton>
            <svg width="6" height="22" viewBox="0 0 6 22" fill="#c7c7c7"><circle cx="3" cy="3" r="2.200" /><circle cx="3" cy="11" r="2.200" /><circle cx="3" cy="19" r="2.200" /></svg>
          </ToolButton>
        </Toolbar>
      </ToolbarBack>
    </>
  );
}

function PageHeader() {
  return (
    <Header>
      <HeaderButton $ml={0}><Icon name="bars" /></HeaderButton>
      <LogoSlot><Icon name="github" size={48} color="#1f2328" /></LogoSlot>
      <Txt $size={20} $weight={600}>Settings</Txt>
      <SearchBox>
        <Icon name="search" />
        <Txt $size={20} $dy={1}>{"  Type"}</Txt>
        <Kbd>/</Kbd>
        <Txt $size={20} $track={-0.1} $dy={1}>to search</Txt>
      </SearchBox>
      <SplitButton $w={84}>
        <div><Icon name="copilot" /></div>
        <div><Icon name="caret" /></div>
      </SplitButton>
      <HeaderRule />
      <HeaderButton $w={86}><Icon name="plus" /><Icon name="caret" /></HeaderButton>
      <HeaderButton><Icon name="issue" /></HeaderButton>
      <HeaderButton><Icon name="pull" /></HeaderButton>
      <HeaderButton><Icon name="inbox" /></HeaderButton>
      <AvatarSlot><Identicon size={50} cell={8} /></AvatarSlot>
    </Header>
  );
}

export default function App() {
  return (
    <Screen>
      <GlobalStyle />
      <BrowserChrome />
      <Viewport>
        <Page>
          <PageHeader />
          <Body>
            <ProfileRow>
              <Identicon size={74} cell={12} />
              <ProfileText>
                <NameLine>
                  <Txt $size={28} $track={-0.35} $dy={2} $weight={600}>achal031</Txt>
                  <Txt $size={28} $track={-0.35} $dy={2} $weight={600} $color="#59636e">(achal031)</Txt>
                </NameLine>
                <SubLine><Txt $size={20} $track={-0.17} $dy={2} $color="#59636e">Your personal account</Txt></SubLine>
              </ProfileText>
              <Spacer />
              <Button $w={258} $h={41} $mt={1}><Txt $size={17} $dy={1} $weight={600}>Go to your personal profile</Txt></Button>
            </ProfileRow>
            <Columns>
              <Sidebar>
                {PERSONAL.map(([icon, label, track]) => (
                  <NavItem key={label} icon={icon} label={label} track={track} />
                ))}
                <SidebarRule />
                <SidebarHeading><Txt $size={17} $weight={600} $color="#59636e">Access</Txt></SidebarHeading>
                {ACCESS.map(([icon, label, track]) => (
                  <NavItem key={label} icon={icon} label={label} track={track} active={label === "Emails"} expandable={icon === "card"} />
                ))}
              </Sidebar>
              <Main>
                <Title><Txt $size={34} $track={-0.35}>Emails</Txt></Title>
                <Card>
                  <CardRow $h={277}>
                    <div>
                      <EmailLine>
                        <Txt $size={22.5} $weight={600}>achalthapa180@gmail.com</Txt>
                        <Dash />
                        <Txt $size={20} $track={-0.35} $dy={-1} $weight={600} $color="#1a7f37">Primary</Txt>
                      </EmailLine>
                      <Note $h={20}><Txt $size={17}>This email will be used for account-related notifications and can also be used for password resets.</Txt></Note>
                      <Bullets $mt={20}>
                        <Bullet head="Visible in emails" text={GIT_NOTE} dy={-1} />
                        <Bullet head="Receives notifications" track={-0.045} text="This email address is the default used for GitHub notifications, i.e., replies to issues, pull requests, etc." />
                      </Bullets>
                    </div>
                    <Button $w={42} $h={42}><Icon name="trash" color="#d1242f" /></Button>
                  </CardRow>
                  <CardRow $h={176}>
                    <div>
                      <EmailLine><Txt $size={22.5} $weight={600}>amk1004403@student.hamk.fi</Txt></EmailLine>
                      <Bullets $mt={10}>
                        <Bullet head="Visible in emails" text={GIT_NOTE} />
                      </Bullets>
                    </div>
                    <Button $w={42} $h={42}><Icon name="trash" color="#d1242f" /></Button>
                  </CardRow>
                </Card>
                <AddLabel><Txt $size={20} $track={-0.14} $weight={600}>Add email address</Txt></AddLabel>
                <AddForm>
                  <Input><Txt $size={20} $dy={1} $color="#59636e">Email address</Txt></Input>
                  <Button $w={90} $h={48}><Txt $size={20} $dy={1} $weight={600}>Add</Txt></Button>
                </AddForm>
              </Main>
            </Columns>
          </Body>
        </Page>
        <Scrollbar>
          <ScrollArrow><svg width="12" height="7" viewBox="0 0 12 7"><path d="M0 7L6 0L12 7Z" fill="#a3a3a3" /></svg></ScrollArrow>
          <ScrollThumb />
          <Spacer />
          <ScrollArrow><svg width="12" height="7" viewBox="0 0 12 7"><path d="M0 0L6 7L12 0Z" fill="#505050" /></svg></ScrollArrow>
        </Scrollbar>
      </Viewport>
      <Taskbar>
        <Widget><Weather /><Badge>1</Badge></Widget>
        <StartButton><WindowsLogo /></StartButton>
        <TaskSearch>
          <Stroke w={26} h={26} d="M11 2.500A8.500 8.500 0 1 1 10.900 2.500M17 17.500L23 23.500" color="#1f1f1f" sw={2.6} round />
          <Txt $size={20} $track={-0.1} $dy={0.5} $color="#5f5f61">{"   Search"}</Txt>
          <Spacer />
          <Petra />
        </TaskSearch>
        <Apps>
          <AppCell><TaskView /></AppCell>
          <AppCell><Outlook /></AppCell>
          <AppCell>
            <ActiveTile>
              <Chrome />
              <TileBadge><ProfileDot $size={24} $font={13}>A</ProfileDot></TileBadge>
            </ActiveTile>
          </AppCell>
          <AppCell><AnyDesk /></AppCell>
          <AppCell><Edge /></AppCell>
          <AppCell><CopilotApp /></AppCell>
          <AppCell $open><Spotify /></AppCell>
          <AppCell><Folder /></AppCell>
          <AppCell $open><GithubDesktop /></AppCell>
          <AppCell $open><VsCode /></AppCell>
        </Apps>
        <Tray>
          <TrayCell $w={48}><Stroke w={18} h={12} d="M2 10L9 3L16 10" color="#1c1c1c" sw={2} round /></TrayCell>
          <TrayCell $w={48}><Cloud /></TrayCell>
          <TrayCell $w={48}><Sync /></TrayCell>
          <TrayCell $w={48}><Wifi /></TrayCell>
          <TrayCell $w={28}><Volume /></TrayCell>
          <TrayCell $w={44}><Battery /></TrayCell>
          <Clock>
            <Txt $size={17.5}>1:25 PM</Txt>
            <Txt $size={17.5}>1/22/2025</Txt>
          </Clock>
        </Tray>
      </Taskbar>
    </Screen>
  );
}
